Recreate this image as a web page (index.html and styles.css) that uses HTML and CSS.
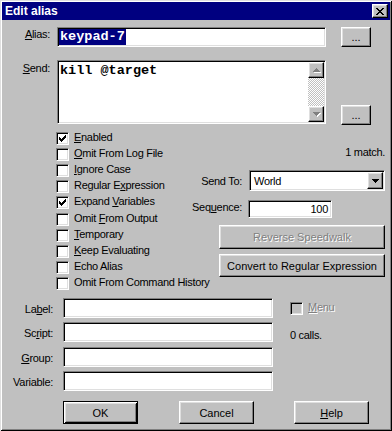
FILE: index.html
```html
<!DOCTYPE html>
<html lang="en">
<head>
<meta charset="utf-8" />
<link rel="stylesheet" href="styles.css">
</head>
<body>
<div class="window">
  <div class="titlebar">
    <span class="title">Edit alias</span>
    <span class="close raised">
      <svg width="8" height="7" viewBox="0 0 8 7"><path d="M0 0h2v1h-2zM6 0h2v1h-2zM1 1h2v1h-2zM5 1h2v1h-2zM2 2h4v1h-4zM3 3h2v1h-2zM2 4h4v1h-4zM1 5h2v1h-2zM5 5h2v1h-2zM0 6h2v1h-2zM6 6h2v1h-2z"/></svg>
    </span>
  </div>
  <div class="client">
    <div class="row alias-row">
      <span class="lbl"><u>A</u>lias:</span>
      <div class="sunken alias-field"><span class="sel">keypad-7</span></div>
      <button class="btn dots">...</button>
    </div>
    <div class="row send-row">
      <span class="lbl top"><u>S</u>end:</span>
      <div class="sunken send-field">
        <div class="send-text">kill @target</div>
        <div class="vscroll">
          <span class="sbtn raised"><svg width="8" height="5" viewBox="0 0 8 5"><path class="shade" d="M4 1h1v1h-1zM3 2h3v1h-3zM2 3h5v1h-5zM1 4h7v1h-7z"/><path class="grey" d="M3 0h1v1h-1zM2 1h3v1h-3zM1 2h5v1h-5zM0 3h7v1h-7z"/></svg></span>
          <span class="track"></span>
          <span class="sbtn raised"><svg width="8" height="5" viewBox="0 0 8 5"><path class="shade" d="M1 1h7v1h-7zM2 2h5v1h-5zM3 3h3v1h-3zM4 4h1v1h-1z"/><path class="grey" d="M0 0h7v1h-7zM1 1h5v1h-5zM2 2h3v1h-3zM3 3h1v1h-1z"/></svg></span>
        </div>
      </div>
      <button class="btn dots low">...</button>
    </div>

    <div class="middle">
      <div class="checks">
        <div class="check"><span class="box"><svg class="tick" width="7" height="7" viewBox="0 0 7 7"><path d="M6 0h1v1h-1zM5 1h2v1h-2zM0 2h1v1h-1zM4 2h3v1h-3zM0 3h2v1h-2zM3 3h3v1h-3zM0 4h5v1h-5zM1 5h3v1h-3zM2 6h1v1h-1z"/></svg></span><span class="ctext"><u>E</u>nabled</span></div>
        <div class="check"><span class="box"></span><span class="ctext"><u>O</u>mit From Log File</span></div>
        <div class="check"><span class="box"></span><span class="ctext"><u>I</u>gnore Case</span></div>
        <div class="check"><span class="box"></span><span class="ctext">Regular E<u>x</u>pression</span></div>
        <div class="check"><span class="box"><svg class="tick" width="7" height="7" viewBox="0 0 7 7"><path d="M6 0h1v1h-1zM5 1h2v1h-2zM0 2h1v1h-1zM4 2h3v1h-3zM0 3h2v1h-2zM3 3h3v1h-3zM0 4h5v1h-5zM1 5h3v1h-3zM2 6h1v1h-1z"/></svg></span><span class="ctext">Expand <u>V</u>ariables</span></div>
        <div class="check gap"><span class="box"></span><span class="ctext">Omit <u>F</u>rom Output</span></div>
        <div class="check"><span class="box"></span><span class="ctext"><u>T</u>emporary</span></div>
        <div class="check"><span class="box"></span><span class="ctext"><u>K</u>eep Evaluating</span></div>
        <div class="check"><span class="box"></span><span class="ctext">Echo Alias</span></div>
        <div class="check"><span class="box"></span><span class="ctext">Omit From Command History</span></div>
      </div>
      <div class="side">
        <div class="match">1 match.</div>
        <div class="side-row sendto">
          <span class="side-lbl">Send To:</span>
          <div class="sunken combo">
            <span class="combo-text">World</span>
            <span class="drop raised"><svg width="7" height="4" viewBox="0 0 7 4"><path d="M0 0h7v1h-7zM1 1h5v1h-5zM2 2h3v1h-3zM3 3h1v1h-1z"/></svg></span>
          </div>
        </div>
        <div class="side-row seq">
          <span class="side-lbl">Seq<u>u</u>ence:</span>
          <div class="sunken seq-field">100</div>
        </div>
        <button class="btn wide reverse" disabled>Reverse Speedwalk</button>
        <button class="btn wide convert">Convert to Regular Expression</button>
      </div>
    </div>

    <div class="lower">
      <div class="fields">
        <div class="frow"><span class="flbl">La<u>b</u>el:</span><div class="sunken finput"></div></div>
        <div class="frow"><span class="flbl">Sc<u>r</u>ipt:</span><div class="sunken finput"></div></div>
        <div class="frow wide-gap"><span class="flbl"><u>G</u>roup:</span><div class="sunken finput"></div></div>
        <div class="frow"><span class="flbl">Variable:</span><div class="sunken finput"></div></div>
      </div>
      <div class="extra">
        <div class="check menu"><span class="box off"></span><span class="ctext dis"><u>M</u>enu</span></div>
        <div class="calls">0 calls.</div>
      </div>
    </div>

    <div class="buttons">
      <button class="btn push default">OK</button>
      <button class="btn push">Cancel</button>
      <button class="btn push"><u>H</u>elp</button>
    </div>
  </div>
</div>
</body>
</html>
```

FILE: styles.css
```css
*{
  margin:0;
  padding:0;
  box-sizing:border-box;
}
body{
  background:#c0c0c0;
  font:11px "Liberation Sans", Arial, sans-serif;
  letter-spacing:-0.3px;
  color:#000;
}
u{
  text-decoration:underline;
  text-underline-offset:1px;
}
.window{
  width:392px;
  height:431px;
  padding:2px;
  background:#c0c0c0;
  box-shadow:inset 1px 1px #dfdfdf, inset -1px -1px #000, inset 2px 2px #fff, inset -2px -2px #808080;
}
.titlebar{
  height:18px;
  background:#000080;
  display:flex;
  align-items:center;
  padding:0 2px 0 3px;
  color:#fff;
}
.title{
  font-weight:bold;
  font-size:12px;
  letter-spacing:0;
}
.raised{
  background:#c0c0c0;
  border:1px solid;
  border-color:#fff #000 #000 #fff;
  box-shadow:inset -1px -1px #808080, inset 1px 1px #dfdfdf;
}
.sunken{
  background:#fff;
  border:1px solid;
  border-color:#808080 #fff #fff #808080;
  box-shadow:inset 1px 1px #000, inset -1px -1px #dfdfdf;
}
.close{
  margin-left:auto;
  width:16px;
  height:14px;
  display:flex;
  align-items:center;
  justify-content:center;
}
.close svg{
  display:block;
  fill:#000;
}
.btn{
  font:inherit;
  color:#000;
  background:#c0c0c0;
  border:1px solid;
  border-color:#fff #000 #000 #fff;
  box-shadow:inset -1px -1px #808080, inset 1px 1px #dfdfdf;
  flex:none;
  display:block;
}
.btn[disabled]{
  color:#808080;
  text-shadow:1px 1px #fff;
}

/* alias + send */
.row{
  display:flex;
  align-items:flex-start;
}
.alias-row{
  margin-top:7px;
  height:20px;
}
.lbl{
  width:48px;
  flex:none;
  text-align:right;
  line-height:13px;
  padding-top:1px;
}
.lbl.top{
  padding-top:2px;
}
.alias-field{
  margin-left:7px;
  width:269px;
  height:20px;
  padding:1px 0 0 1px;
  flex:none;
}
.sel{
  display:inline-block;
  background:#000080;
  color:#fff;
  font:bold 13.5px "Liberation Mono", monospace;
  letter-spacing:0;
  line-height:16px;
  padding:0 1px;
}
.dots{
  margin-left:15px;
  width:30px;
  height:20px;
}
.send-row{
  margin-top:13px;
  height:64px;
}
.send-field{
  margin-left:7px;
  width:269px;
  height:64px;
  display:flex;
  flex:none;
}
.send-text{
  flex:1;
  padding:2px 0 0 2px;
  font:bold 13.5px "Liberation Mono", monospace;
  letter-spacing:0;
  line-height:16px;
}
.vscroll{
  width:16px;
  margin:1px 1px 1px 0;
  display:flex;
  flex-direction:column;
}
.sbtn{
  height:16px;
  display:flex;
  align-items:center;
  justify-content:center;
  padding-left:1px;
}
.sbtn svg{
  display:block;
}
.shade{
  fill:#fff;
}
.grey{
  fill:#808080;
}
.track{
  flex:1;
  background:repeating-conic-gradient(#c0c0c0 0 25%, #fff 0 50%) 0 0/2px 2px;
}
.dots.low{
  align-self:flex-end;
  margin-bottom:-1px;
}

/* checkboxes and side panel */
.middle{
  display:flex;
  margin-top:6px;
}
.checks{
  width:136px;
  margin-left:54px;
  flex:none;
}
.check{
  display:flex;
  height:16px;
  white-space:nowrap;
}
.check.gap{
  margin-top:1px;
}
.box{
  width:13px;
  height:13px;
  margin-top:2px;
  padding:2px;
  flex:none;
  background:#fff;
  border:1px solid;
  border-color:#808080 #fff #fff #808080;
  box-shadow:inset 1px 1px #000, inset -1px -1px #dfdfdf;
}
.box.off{
  background:#c0c0c0;
}
.tick{
  display:block;
  fill:#000;
}
.ctext{
  margin-left:5px;
  line-height:14px;
}
.dis{
  color:#808080;
  text-shadow:1px 1px #fff;
}
.side{
  width:193px;
  flex:none;
}
.match{
  margin-top:16px;
  line-height:13px;
  text-align:right;
}
.side-row{
  display:flex;
}
.side-lbl{
  width:50px;
  flex:none;
  text-align:right;
  line-height:13px;
}
.sendto{
  margin-top:11px;
  height:21px;
}
.sendto .side-lbl{
  padding-top:5px;
}
.combo{
  margin-left:7px;
  width:136px;
  height:21px;
  display:flex;
  padding:1px;
}
.combo-text{
  flex:1;
  padding:3px 0 0 3px;
  line-height:13px;
}
.drop{
  width:16px;
  height:17px;
  display:flex;
  align-items:center;
  justify-content:center;
}
.drop svg{
  display:block;
  fill:#000;
}
.seq{
  margin-top:9px;
  height:18px;
}
.seq .side-lbl{
  padding-top:1px;
}
.seq-field{
  margin-left:6px;
  width:84px;
  height:18px;
  text-align:right;
  padding:2px 3px 0 0;
  line-height:13px;
}
.wide{
  margin-left:27px;
  width:166px;
}
.reverse{
  margin-top:7px;
  height:24px;
}
.convert{
  margin-top:5px;
  height:23px;
}

/* label / script / group / variable */
.lower{
  display:flex;
  margin-top:7px;
}
.fields{
  flex:none;
}
.frow{
  display:flex;
  height:20px;
}
.frow + .frow{
  margin-top:4px;
}
.frow.wide-gap{
  margin-top:5px;
}
.flbl{
  width:51px;
  flex:none;
  text-align:right;
  line-height:13px;
  padding-top:5px;
}
.finput{
  margin-left:10px;
  width:210px;
  height:20px;
}
.extra{
  margin-left:17px;
}
.menu{
  margin-top:2px;
}
.calls{
  margin-top:13px;
  line-height:13px;
}

/* bottom buttons */
.buttons{
  display:flex;
  margin-top:10px;
  padding-left:61px;
}
.push{
  width:75px;
  height:23px;
}
.push + .push{
  margin-left:41px;
}
.push + .push + .push{
  margin-left:40px;
}
.btn.default{
  border-color:#000;
  box-shadow:inset 1px 1px #fff, inset -1px -1px #000, inset 2px 2px #dfdfdf, inset -2px -2px #808080;
}
```
